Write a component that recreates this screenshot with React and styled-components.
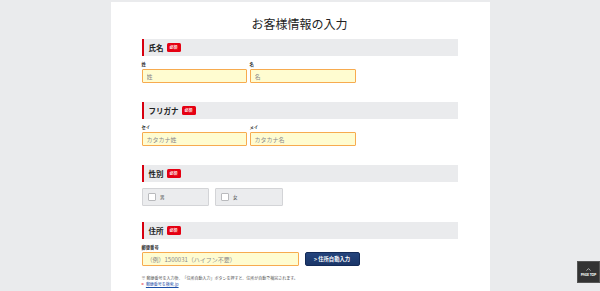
import React from "react";
import styled, { createGlobalStyle } from "styled-components";

const Global = createGlobalStyle`
  html, body { margin: 0; padding: 0; }
  body {
    background: #eaebed;
    font-family: "Noto Sans CJK JP", "Noto Sans", sans-serif;
    color: #222;
  }
  * { box-sizing: border-box; }
`;

const Page = styled.div`
  display: flex;
  justify-content: center;
  padding-top: 2px;
  height: 100vh;
  overflow: hidden;
`;

const Card = styled.main`
  width: 379px;
  background: #fff;
  padding: 15px 32px 0 31px;
  height: 100%;
`;

const Title = styled.h1`
  margin: 0;
  font-size: 12px;
  line-height: 14px;
  font-weight: 400;
  text-align: center;
  color: #222;
`;

const Section = styled.section`
  margin-top: ${(p) => p.$gap}px;
`;

const Header = styled.div`
  display: flex;
  align-items: center;
  gap: 3px;
  height: 16.5px;
  background: #eaebed;
  border-left: 2px solid #d7000f;
  padding-left: 5px;
  font-size: 7.5px;
  font-weight: 700;
  color: #222;
`;

const Badge = styled.span`
  display: inline-flex;
  align-items: center;
  justify-content: center;
  width: 14px;
  height: 8.5px;
  background: #e50012;
  border-radius: 1.5px;
  color: #fff;
  font-size: 4px;
  font-weight: 700;
`;

const Row = styled.div`
  display: flex;
  gap: ${(p) => p.$gap || 3}px;
  align-items: flex-end;
`;

const Field = styled.div`
  display: flex;
  flex-direction: column;
`;

const FieldLabel = styled.div`
  margin-top: 4px;
  height: 8px;
  line-height: 8px;
  font-size: 4.3px;
  font-weight: 700;
  color: #333;
`;

const Input = styled.input`
  margin-top: 1.5px;
  width: ${(p) => p.$w}px;
  height: 14px;
  background: #fffcd0;
  border: 1.5px solid #f7ab4f;
  border-radius: 1px;
  padding: 0 0 0 4px;
  font-family: inherit;
  font-size: 6px;
  color: #333;
  outline: none;
  &::placeholder { color: #8a8a8a; }
`;

const ChoiceRow = styled.div`
  display: flex;
  gap: 6px;
  margin-top: 6.5px;
`;

const Choice = styled.label`
  display: flex;
  align-items: center;
  gap: 4.5px;
  width: ${(p) => p.$w}px;
  height: 18px;
  background: #ebecee;
  border: 1px solid #d3d4d7;
  border-radius: 1px;
  padding-left: 5px;
  font-size: 4.5px;
  color: #444;
`;

const Box = styled.span`
  width: 8px;
  height: 8.5px;
  background: #fff;
  border: 0.5px solid #b9babd;
  border-radius: 1px;
`;

const AutoButton = styled.button`
  margin-left: 3px;
  width: 55px;
  height: 14px;
  background: linear-gradient(#24447c, #1a3568);
  border: 1px solid #132a57;
  border-radius: 2px;
  color: #fff;
  font-family: inherit;
  font-size: 5.3px;
  font-weight: 700;
  padding: 0;
  display: flex;
  align-items: center;
  justify-content: center;
  gap: 2px;
`;

const Note = styled.p`
  margin: 9px 0 0;
  font-size: 4px;
  line-height: 6px;
  color: #555;
  white-space: nowrap;
`;

const LinkLine = styled.div`
  font-size: 4px;
  line-height: 6px;
  display: flex;
  gap: 2px;
  align-items: center;
`;

const Arrow = styled.span`
  color: #e60012;
  font-weight: 700;
`;

const Link = styled.a`
  color: #1d4fa8;
  text-decoration: underline;
`;

const PageTop = styled.a`
  position: fixed;
  right: 0;
  bottom: 8px;
  width: 23px;
  height: 22px;
  background: #333;
  border: 0.5px solid #555;
  display: flex;
  flex-direction: column;
  align-items: center;
  justify-content: center;
  gap: 1px;
  color: #fff;
  font-size: 3.4px;
  font-weight: 700;
  letter-spacing: -0.1px;
  text-decoration: none;
  white-space: nowrap;
`;

export default function App() {
  return (
    <>
      <Global />
      <Page>
        <Card>
          <Title>お客様情報の入力</Title>

          <Section $gap={8}>
            <Header>
              氏名<Badge>必須</Badge>
            </Header>
            <Row>
              <Field>
                <FieldLabel>姓</FieldLabel>
                <Input $w={105} placeholder="姓" />
              </Field>
              <Field>
                <FieldLabel>名</FieldLabel>
                <Input $w={106} placeholder="名" />
              </Field>
            </Row>
          </Section>

          <Section $gap={19}>
            <Header>
              フリガナ<Badge>必須</Badge>
            </Header>
            <Row>
              <Field>
                <FieldLabel>セイ</FieldLabel>
                <Input $w={105} placeholder="カタカナ姓" />
              </Field>
              <Field>
                <FieldLabel>メイ</FieldLabel>
                <Input $w={106} placeholder="カタカナ名" />
              </Field>
            </Row>
          </Section>

          <Section $gap={19}>
            <Header>
              性別<Badge>必須</Badge>
            </Header>
            <ChoiceRow>
              <Choice $w={67}>
                <Box />男
              </Choice>
              <Choice $w={68}>
                <Box />女
              </Choice>
            </ChoiceRow>
          </Section>

          <Section $gap={16}>
            <Header>
              住所<Badge>必須</Badge>
            </Header>
            <Field>
              <FieldLabel>郵便番号</FieldLabel>
              <Row>
                <Input $w={157} placeholder="（例）1500031（ハイフン不要）" />
                <AutoButton type="button">&gt; 住所自動入力</AutoButton>
              </Row>
            </Field>
            <Note>
              ※ 郵便番号を入力後、「住所自動入力」ボタンを押すと、住所が自動で補完されます。
            </Note>
            <LinkLine>
              <Arrow>&gt;</Arrow>
              <Link href="#">郵便番号を検索.jp</Link>
            </LinkLine>
          </Section>
        </Card>
      </Page>
      <PageTop href="#">
        <svg width="5" height="3" viewBox="0 0 5 3">
          <path d="M0.5 2.6 L2.5 0.6 L4.5 2.6" fill="none" stroke="#fff" strokeWidth="0.6" />
        </svg>
        PAGE TOP
      </PageTop>
    </>
  );
}
